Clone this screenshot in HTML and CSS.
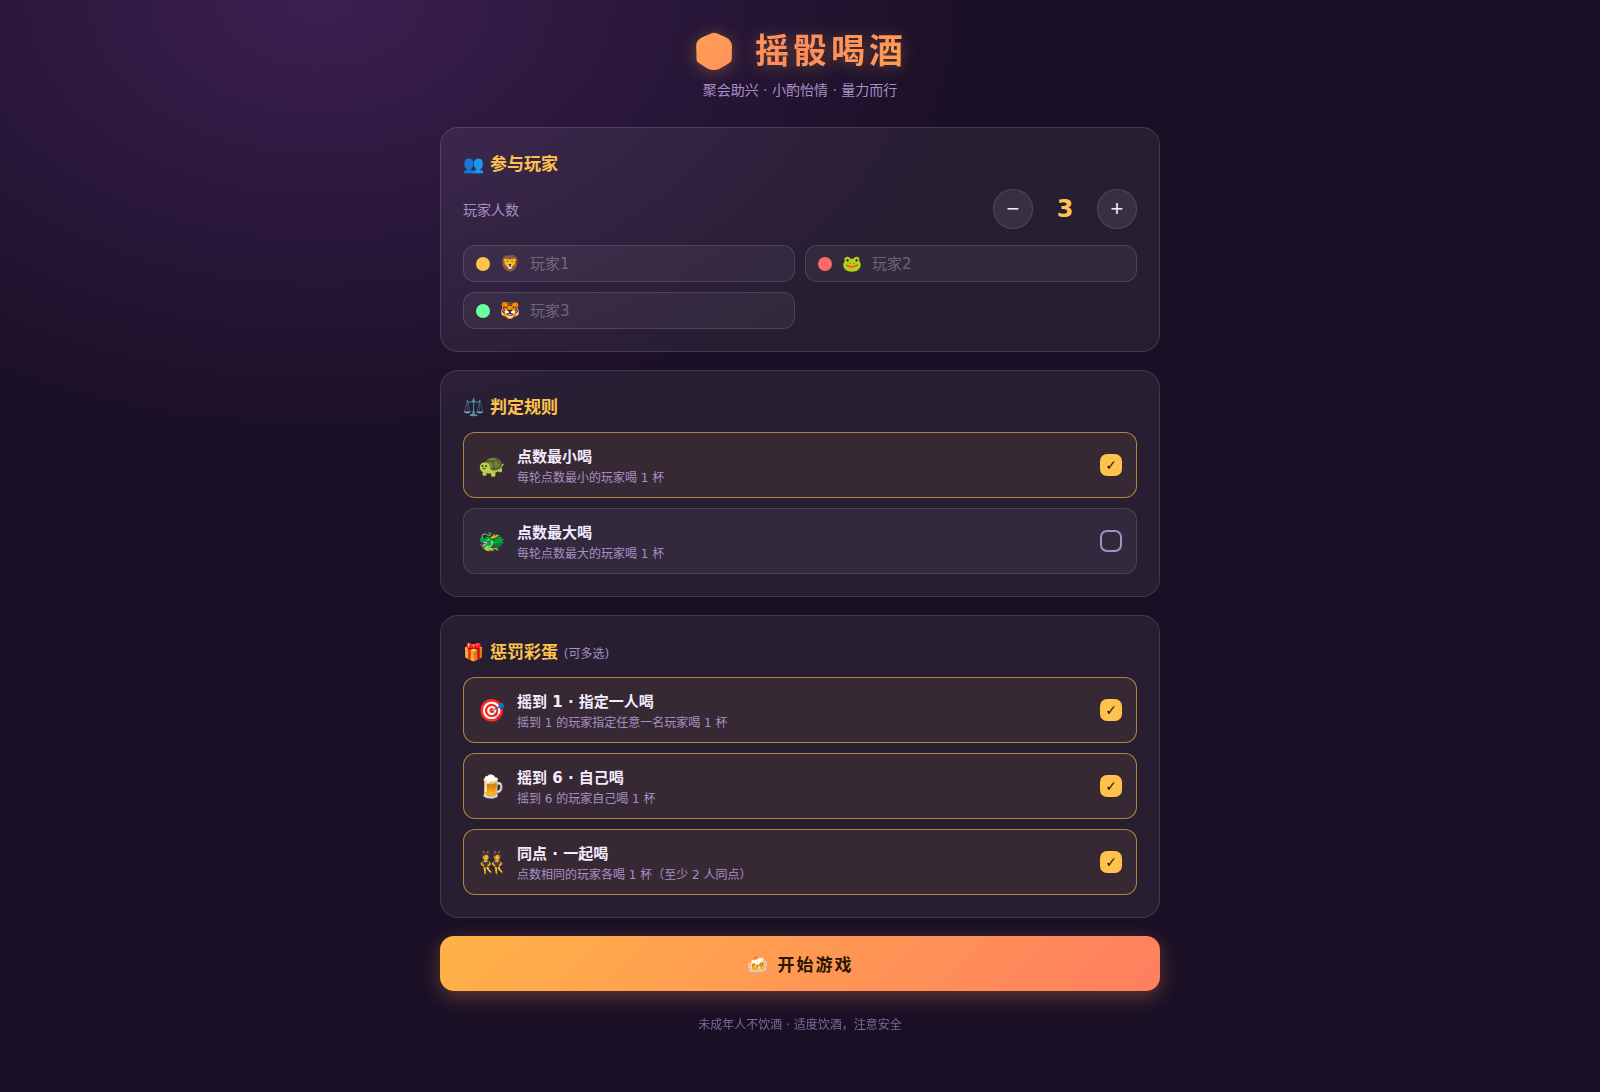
FILE: index.html
```html
<!DOCTYPE html>
<html lang="zh-CN">
<head>
<meta charset="utf-8">
<meta name="viewport" content="width=device-width, initial-scale=1">
<title>摇骰喝酒</title>
<link rel="stylesheet" href="styles.css">
</head>
<body>
<main class="app">
  <header class="header">
    <h1 class="title">🎲 摇骰喝酒</h1>
    <p class="subtitle">聚会助兴 · 小酌怡情 · 量力而行</p>
  </header>

  <section class="card">
    <h2 class="card-title">👥 参与玩家</h2>
    <div class="count-row">
      <span class="count-label">玩家人数</span>
      <div class="stepper">
        <button class="step-btn" type="button" aria-label="减少">−</button>
        <output class="count">3</output>
        <button class="step-btn" type="button" aria-label="增加">+</button>
      </div>
    </div>
    <div class="players">
      <label class="player"><span class="dot dot-yellow"></span><span class="avatar">🦁</span><input class="player-name" type="text" placeholder="玩家1"></label>
      <label class="player"><span class="dot dot-red"></span><span class="avatar">🐸</span><input class="player-name" type="text" placeholder="玩家2"></label>
      <label class="player"><span class="dot dot-green"></span><span class="avatar">🐯</span><input class="player-name" type="text" placeholder="玩家3"></label>
    </div>
  </section>

  <section class="card">
    <h2 class="card-title">⚖️ 判定规则</h2>
    <div class="options">
      <label class="option">
        <span class="option-icon">🐢</span>
        <span class="option-text"><span class="option-name">点数最小喝</span><span class="option-desc">每轮点数最小的玩家喝 1 杯</span></span>
        <input class="check" type="checkbox" checked>
      </label>
      <label class="option">
        <span class="option-icon">🐲</span>
        <span class="option-text"><span class="option-name">点数最大喝</span><span class="option-desc">每轮点数最大的玩家喝 1 杯</span></span>
        <input class="check" type="checkbox">
      </label>
    </div>
  </section>

  <section class="card">
    <h2 class="card-title">🎁 惩罚彩蛋 <small class="hint">(可多选)</small></h2>
    <div class="options">
      <label class="option">
        <span class="option-icon">🎯</span>
        <span class="option-text"><span class="option-name">摇到 1 · 指定一人喝</span><span class="option-desc">摇到 1 的玩家指定任意一名玩家喝 1 杯</span></span>
        <input class="check" type="checkbox" checked>
      </label>
      <label class="option">
        <span class="option-icon">🍺</span>
        <span class="option-text"><span class="option-name">摇到 6 · 自己喝</span><span class="option-desc">摇到 6 的玩家自己喝 1 杯</span></span>
        <input class="check" type="checkbox" checked>
      </label>
      <label class="option">
        <span class="option-icon">👯</span>
        <span class="option-text"><span class="option-name">同点 · 一起喝</span><span class="option-desc">点数相同的玩家各喝 1 杯（至少 2 人同点）</span></span>
        <input class="check" type="checkbox" checked>
      </label>
    </div>
  </section>

  <button class="start" type="button">🍻 开始游戏</button>
  <footer class="footer">未成年人不饮酒 · 适度饮酒，注意安全</footer>
</main>
</body>
</html>
```
FILE: styles.css
```css
:root {
  --bg: #1a1026;
  --text: #f5ebff;
  --muted: #a78fc4;
  --gold: #ffc34d;
  --line: rgba(255, 255, 255, 0.12);
}

* {
  box-sizing: border-box;
  margin: 0;
  padding: 0;
}

body {
  min-height: 100vh;
  background: radial-gradient(1200px 800px at 20% 0%, #3b1f50 0%, transparent 55%), var(--bg);
  color: var(--text);
  font-family: "DejaVu Sans", "Noto Sans CJK SC", sans-serif;
}

button,
input {
  font-family: inherit;
  color: inherit;
}

.app {
  max-width: 760px;
  margin: 0 auto;
  padding: 28px 20px 60px;
}

.header {
  margin-bottom: 27px;
  text-align: center;
}

.title {
  background: linear-gradient(135deg, #ffc34d, #ff8c5a 50%, #ffc34d);
  -webkit-background-clip: text;
  background-clip: text;
  color: transparent;
  font-size: 34px;
  line-height: 46px;
  letter-spacing: 4px;
  filter: drop-shadow(0 2px 8px rgba(255, 179, 71, 0.3));
}

.subtitle {
  margin-top: 6px;
  color: var(--muted);
  font-size: 14px;
  line-height: 20px;
}

.card {
  margin-bottom: 18px;
  padding: 22px;
  border: 1px solid var(--line);
  border-radius: 18px;
  background: rgba(255, 255, 255, 0.06);
}

.card-title {
  margin-bottom: 10px;
  color: var(--gold);
  font-size: 17px;
  line-height: 29px;
}

.hint {
  color: var(--muted);
  font-size: 12px;
  font-weight: 400;
  line-height: 1;
}

.count-row {
  display: flex;
  align-items: center;
  justify-content: space-between;
  margin-bottom: 16px;
}

.count-label {
  color: var(--muted);
  font-size: 14px;
}

.stepper {
  display: flex;
  align-items: center;
  gap: 14px;
}

.step-btn {
  width: 40px;
  height: 40px;
  border: 1px solid var(--line);
  border-radius: 50%;
  background: rgba(255, 255, 255, 0.08);
  font-family: "Liberation Sans", sans-serif;
  font-size: 22px;
  line-height: 1;
}

.count {
  min-width: 36px;
  color: var(--gold);
  font-size: 24px;
  font-weight: 700;
  text-align: center;
}

.players {
  display: grid;
  grid-template-columns: repeat(2, 1fr);
  gap: 10px;
}

.player {
  display: flex;
  align-items: center;
  gap: 10px;
  height: 37px;
  padding: 0 12px;
  border: 1px solid var(--line);
  border-radius: 12px;
  background: rgba(255, 255, 255, 0.05);
}

.dot {
  width: 14px;
  height: 14px;
  border-radius: 50%;
}

.dot-yellow { background: #ffc34d; }
.dot-red { background: #ff6b6b; }
.dot-green { background: #6bffa0; }

.avatar {
  font-size: 16px;
  line-height: 20px;
}

.player-name {
  flex: 1;
  min-width: 0;
  border: 0;
  background: transparent;
  font-size: 15px;
  outline: none;
}

.player-name::placeholder {
  color: rgba(255, 255, 255, 0.3);
}

.options {
  display: grid;
  gap: 10px;
}

.option {
  display: flex;
  align-items: center;
  gap: 12px;
  height: 66px;
  padding: 0 14px;
  border: 1px solid var(--line);
  border-radius: 12px;
  background: rgba(255, 255, 255, 0.05);
}

.option:has(:checked) {
  border-color: rgba(255, 195, 77, 0.6);
  background: rgba(255, 179, 71, 0.08);
}

.option-icon {
  padding-top: 2px;
  font-size: 22px;
  line-height: 28px;
}

.option-text {
  display: flex;
  flex: 1;
  flex-direction: column;
}

.option-name {
  font-size: 15px;
  font-weight: 700;
  line-height: 26px;
}

.option-desc {
  color: var(--muted);
  font-size: 12px;
  line-height: 16px;
}

.check {
  display: grid;
  width: 22px;
  height: 22px;
  border: 2px solid var(--muted);
  border-radius: 7px;
  appearance: none;
  place-items: center;
}

.check:checked {
  border-color: var(--gold);
  background: var(--gold);
}

.check:checked::before {
  color: #2a1500;
  content: "✓";
  font-size: 14px;
  line-height: 18px;
}

.start {
  display: block;
  width: 100%;
  height: 55px;
  border: 0;
  border-radius: 14px;
  background: linear-gradient(135deg, #ffb347, #ff7e5f);
  box-shadow: 0 6px 20px rgba(255, 150, 80, 0.3);
  color: #2a1500;
  font-size: 17px;
  font-weight: 700;
  letter-spacing: 2px;
}

.footer {
  margin-top: 25px;
  color: var(--muted);
  font-size: 12px;
  line-height: 18px;
  opacity: 0.7;
  text-align: center;
}
```
